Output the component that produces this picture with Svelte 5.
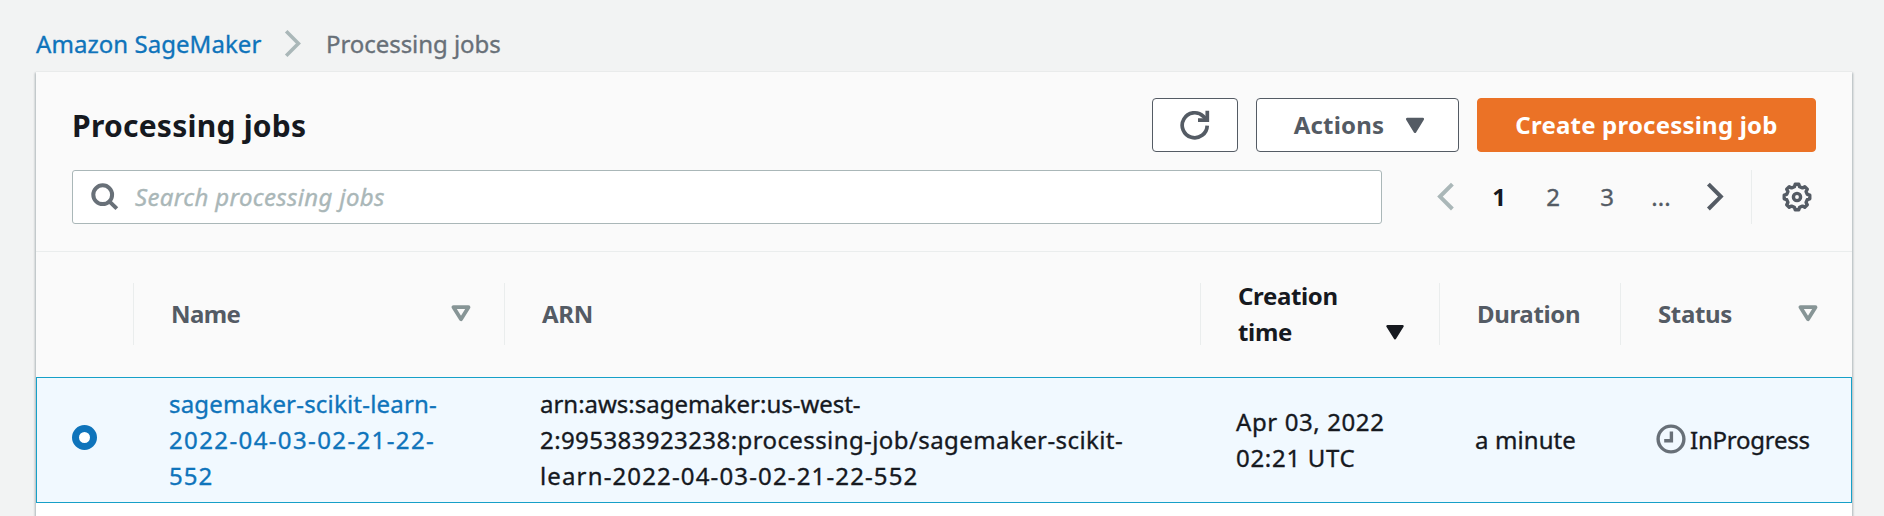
<script>
  const nameLines = [
    { text: 'sagemaker-scikit-learn-', spacing: 0.2 },
    { text: '2022-04-03-02-21-22-', spacing: 1.38 },
    { text: '552', spacing: 1 }
  ];
  const arnLines = [
    { text: 'arn:aws:sagemaker:us-west-', spacing: -0.02 },
    { text: '2:995383923238:processing-job/sagemaker-scikit-', spacing: 0.41 },
    { text: 'learn-2022-04-03-02-21-22-552', spacing: 1.14 }
  ];
  const dateLines = [
    { text: 'Apr 03, 2022', spacing: 0.6 },
    { text: '02:21 UTC', spacing: 0.7 }
  ];
  const pages = ['1', '2', '3', '...'];

  // Outline of the settings cog: eight teeth around the centre.
  function cog(teeth, outer, inner) {
    const pts = [];
    for (let i = 0; i < teeth; i++) {
      const base = (360 / teeth) * i;
      for (const [r, a] of [[outer, -8], [outer, 8], [inner, 14], [inner, 31]]) {
        const t = ((base + a) * Math.PI) / 180;
        pts.push(`${(15 + r * Math.sin(t)).toFixed(2)} ${(15 - r * Math.cos(t)).toFixed(2)}`);
      }
    }
    return `M${pts.join('L')}z`;
  }
  const cogPath = cog(8, 12.9, 10.6);
</script>

{#snippet lines(list)}
  {#each list as line}
    <span class="line" style:letter-spacing="{line.spacing}px">{line.text}</span>
  {/each}
{/snippet}

{#snippet triangle(kind)}
  <svg class="triangle {kind}" width="20" height="17" viewBox="0 0 20 17">
    <path d="M2.5 2.2h15L10 14.2z" />
  </svg>
{/snippet}

<div class="page">
  <nav class="breadcrumb">
    <a class="crumb-link" href="#sagemaker">Amazon SageMaker</a>
    <svg class="crumb-sep" width="18" height="30" viewBox="0 0 18 30"><path d="M2.2 2.3 14.4 14.5 2.2 26.7" /></svg>
    <span class="crumb-current">Processing jobs</span>
  </nav>

  <section class="panel">
    <header class="head">
      <h1>Processing jobs</h1>
      <div class="buttons">
        <button class="btn refresh" aria-label="Refresh">
          <svg width="30" height="30" viewBox="0 0 30 30">
            <path d="M27.2 15.6A12.5 12.5 0 1 1 23.4 6.3l2.4 2.4" />
            <path d="M27.3.8V10.2H18" />
          </svg>
        </button>
        <button class="btn actions">Actions
          <svg width="20" height="17" viewBox="0 0 20 17"><path d="M2.2 2h15.6L10 14.8z" /></svg>
        </button>
        <button class="btn primary">Create processing job</button>
      </div>
    </header>

    <div class="tools">
      <div class="search">
        <svg width="28" height="28" viewBox="0 0 28 28">
          <circle cx="11.7" cy="11.7" r="9.4" /><path d="m18.3 18.3 7.5 7.4" />
        </svg>
        <span>Search processing jobs</span>
      </div>
      <div class="pager">
        <span class="page-item"><svg class="prev" width="18" height="30" viewBox="0 0 18 30"><path d="M15.4 2.2 3 14.6 15.4 27" /></svg></span>
        {#each pages as p, i}
          <span class="page-item" class:current={i === 0}>{p}</span>
        {/each}
        <span class="page-item"><svg width="18" height="30" viewBox="0 0 18 30"><path d="M2.4 2.2 14.8 14.6 2.4 27" /></svg></span>
      </div>
      <div class="settings">
        <svg width="30" height="30" viewBox="0 0 30 30">
          <path d={cogPath} />
          <circle cx="15" cy="15" r="3.6" />
        </svg>
      </div>
    </div>

    <div class="grid thead">
      <div class="th"></div>
      <div class="th"><span class="label tight">Name</span>{@render triangle('hollow')}</div>
      <div class="th"><span class="label">ARN</span></div>
      <div class="th sorted"><span class="label">Creation<br />time</span>{@render triangle('solid')}</div>
      <div class="th"><span class="label">Duration</span></div>
      <div class="th"><span class="label">Status</span>{@render triangle('hollow')}</div>
    </div>

    <div class="grid row">
      <div class="td"><span class="radio"></span></div>
      <div class="td"><a class="job" href="#job">{@render lines(nameLines)}</a></div>
      <div class="td"><div>{@render lines(arnLines)}</div></div>
      <div class="td"><div>{@render lines(dateLines)}</div></div>
      <div class="td">a minute</div>
      <div class="td status">
        <svg width="30" height="30" viewBox="0 0 30 30">
          <circle cx="15" cy="15" r="12.9" /><path d="M15.4 7.6v9.2H8.2" />
        </svg>
        <span>InProgress</span>
      </div>
    </div>
  </section>
</div>

<style>
  :global(body) {
    background: #f2f3f3;
    overflow: hidden;
  }
  .page {
    height: 516px;
    box-sizing: border-box;
    display: flex;
    flex-direction: column;
    padding: 26px 32px 0 36px;
    background: #f2f3f3;
    color: #16191f;
    font: 24px/36px 'Noto Sans', 'Open Sans', sans-serif;
    -webkit-text-stroke: 0.35px currentColor;
    overflow: hidden;
  }
  svg {
    display: block;
    flex: none;
    fill: none;
    stroke: #545b64;
    stroke-width: 4;
  }
  a {
    color: #0f74bb;
    text-decoration: none;
  }
  .breadcrumb {
    display: flex;
    align-items: center;
    height: 36px;
    margin-bottom: 10px;
  }
  .crumb-link {
    width: 248px;
    letter-spacing: 0.05px;
  }
  .crumb-sep {
    width: 18px;
    margin-right: 24px;
    stroke: #aab7b8;
    stroke-width: 3.6;
  }
  .crumb-current {
    color: #687078;
    letter-spacing: -0.06px;
  }
  .panel {
    flex: 1;
    background: #fff;
    box-shadow: 0 0 1px 0 #d5dbdb, 0 2px 2px 1px rgba(0, 28, 36, 0.3);
  }
  .head {
    display: flex;
    justify-content: space-between;
    align-items: center;
    height: 54px;
    padding: 26px 36px 0;
    background: #fafafa;
  }
  h1 {
    margin: 2px 0 0;
    font-size: 30px;
    line-height: 40px;
    letter-spacing: 0.25px;
    -webkit-text-stroke: 0;
  }
  .buttons {
    display: flex;
    gap: 18px;
  }
  .btn {
    display: flex;
    align-items: center;
    justify-content: center;
    box-sizing: border-box;
    height: 54px;
    padding: 0;
    border: 1px solid #545b64;
    border-radius: 4px;
    background: #fff;
    color: #545b64;
    font: 700 24px/36px 'Noto Sans', 'Open Sans', sans-serif;
    letter-spacing: 0.2px;
    -webkit-text-stroke: 0;
  }
  .refresh {
    width: 86px;
  }
  .refresh svg {
    stroke-width: 3.7;
  }
  .actions {
    width: 203px;
    padding-left: 4px;
    gap: 21px;
  }
  .actions svg {
    fill: #545b64;
    stroke-width: 2.5;
    stroke-linejoin: round;
  }
  .primary {
    width: 339px;
    border-color: #eb7226;
    background: #eb7226;
    color: #fff;
  }
  .tools {
    display: flex;
    height: 54px;
    padding: 18px 36px 27px;
    border-bottom: 1px solid #eaeded;
    background: #fafafa;
  }
  .search {
    display: flex;
    align-items: center;
    box-sizing: border-box;
    width: 1310px;
    padding-left: 18px;
    border: 1px solid #aab7b8;
    border-radius: 3px;
    background: #fff;
    color: #aab7b8;
    font-style: italic;
    letter-spacing: 0.35px;
  }
  .search svg {
    margin-right: 16px;
    stroke: #687078;
  }
  .pager {
    display: flex;
    align-items: center;
    width: 369px;
    padding-left: 37px;
    box-sizing: border-box;
    color: #545b64;
  }
  .page-item {
    display: flex;
    justify-content: center;
    width: 54px;
  }
  .page-item:first-child {
    width: 53px;
  }
  .pager .prev {
    stroke: #aab7b8;
  }
  .current {
    color: #16191f;
    font-weight: 700;
    -webkit-text-stroke: 0;
  }
  .settings {
    display: flex;
    align-items: center;
    justify-content: flex-end;
    width: 63px;
    border-left: 1px solid #eaeded;
  }
  .settings svg {
    margin: 0 3px 1px 0;
    stroke-width: 3.4;
    stroke-linejoin: round;
  }
  .grid {
    display: grid;
    grid-template-columns: 97px 371px 696px 239px 181px 232px;
  }
  .thead {
    box-sizing: border-box;
    height: 125px;
    padding-bottom: 2px;
    align-items: center;
    background: #fafafa;
    color: #545b64;
    font-weight: 700;
    -webkit-text-stroke: 0;
  }
  .th {
    display: flex;
    align-items: center;
    justify-content: space-between;
    box-sizing: border-box;
    height: 62px;
    padding: 0 33px 0 37px;
    border-left: 1px solid #eaeded;
    letter-spacing: -0.35px;
  }
  .th:last-child {
    padding-right: 34px;
  }
  .th:first-child {
    border: 0;
  }
  .tight {
    letter-spacing: -0.6px;
  }
  .sorted {
    padding-right: 34px;
    color: #16191f;
  }
  .triangle {
    stroke: #879596;
    stroke-linejoin: round;
  }
  .hollow {
    stroke-width: 3.8;
  }
  .solid {
    align-self: flex-end;
    margin-bottom: 4px;
    fill: #16191f;
    stroke: #16191f;
    stroke-width: 2.5;
  }
  .row {
    box-sizing: border-box;
    height: 126px;
    border: 1px solid #16a0c8;
    background: #f1f9ff;
    align-items: center;
  }
  .td {
    display: flex;
    align-items: center;
    padding-left: 35px;
    letter-spacing: 0.1px;
    white-space: nowrap;
  }
  .line {
    display: block;
  }
  .radio {
    box-sizing: border-box;
    width: 25px;
    height: 25px;
    margin-top: -5px;
    border: 7.5px solid #0f74bb;
    border-radius: 50%;
    background: #fff;
  }
  .status {
    gap: 4px;
    letter-spacing: -0.25px;
  }
  .status svg {
    margin-bottom: 2px;
    stroke: #687078;
    stroke-width: 3.4;
  }
</style>
